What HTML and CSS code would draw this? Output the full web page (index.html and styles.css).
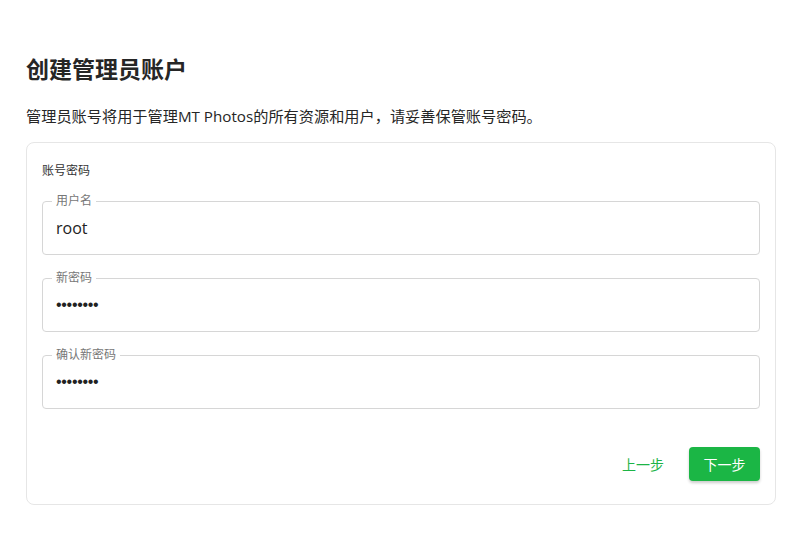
FILE: index.html
```html
<!DOCTYPE html>
<html lang="zh">
<head>
<meta charset="utf-8">
<link rel="stylesheet" href="styles.css">
</head>
<body>
<main class="page">
  <h1 class="title">创建管理员账户</h1>
  <p class="desc">管理员账号将用于管理MT Photos的所有资源和用户，请妥善保管账号密码。</p>
  <section class="card">
    <div class="section-label">账号密码</div>
    <div class="fields">
      <div class="field">
        <span class="legend">用户名</span>
        <div class="value">root</div>
      </div>
      <div class="field">
        <span class="legend">新密码</span>
        <div class="value dots">••••••••</div>
      </div>
      <div class="field">
        <span class="legend">确认新密码</span>
        <div class="value dots">••••••••</div>
      </div>
    </div>
    <div class="actions">
      <button class="btn btn-text">上一步</button>
      <button class="btn btn-primary">下一步</button>
    </div>
  </section>
</main>
</body>
</html>
```

FILE: styles.css
```css
* { box-sizing: border-box; }
html, body { margin: 0; background: #fff; }
body {
  font-family: "Open Sans", "Noto Sans CJK SC", sans-serif;
  color: #222;
}
.page {
  padding: 52px 24px 0 26px;
}
.title {
  margin: 0;
  font-size: 23px;
  line-height: 34px;
  font-weight: 700;
  color: #262626;
}
.desc {
  margin: 18px 0 0;
  font-size: 15.2px;
  line-height: 24px;
  color: #262626;
}
.card {
  margin-top: 14px;
  border: 1px solid #e6e6e6;
  border-radius: 8px;
  padding: 19px 15px 23px 15px;
}
.section-label {
  font-size: 12px;
  line-height: 18px;
  color: #333;
}
.fields {
  margin-top: 21px;
  display: flex;
  flex-direction: column;
  gap: 23px;
}
.field {
  position: relative;
  height: 54px;
  border: 1px solid #d6d6d6;
  border-radius: 4px;
  display: flex;
  align-items: center;
  padding: 0 13px;
}
.legend {
  position: absolute;
  top: -8px;
  left: 9px;
  padding: 0 4px;
  background: #fff;
  font-size: 12px;
  line-height: 14px;
  color: #777;
}
.value {
  font-size: 16px;
  color: #222;
}
.dots {
  font-family: "Liberation Sans", sans-serif;
  font-size: 16px;
  letter-spacing: -0.3px;
}
.actions {
  margin-top: 38px;
  display: flex;
  justify-content: flex-end;
  align-items: center;
  gap: 17px;
}
.btn {
  font-family: inherit;
  font-size: 14px;
  border: none;
  border-radius: 4px;
  height: 34px;
  cursor: pointer;
}
.btn-text {
  background: transparent;
  color: #1db446;
  padding: 0 8px;
}
.btn-primary {
  width: 71px;
  background: #1bb645;
  color: #fff;
  box-shadow: 0 2px 3px rgba(0,0,0,0.2);
}
```
